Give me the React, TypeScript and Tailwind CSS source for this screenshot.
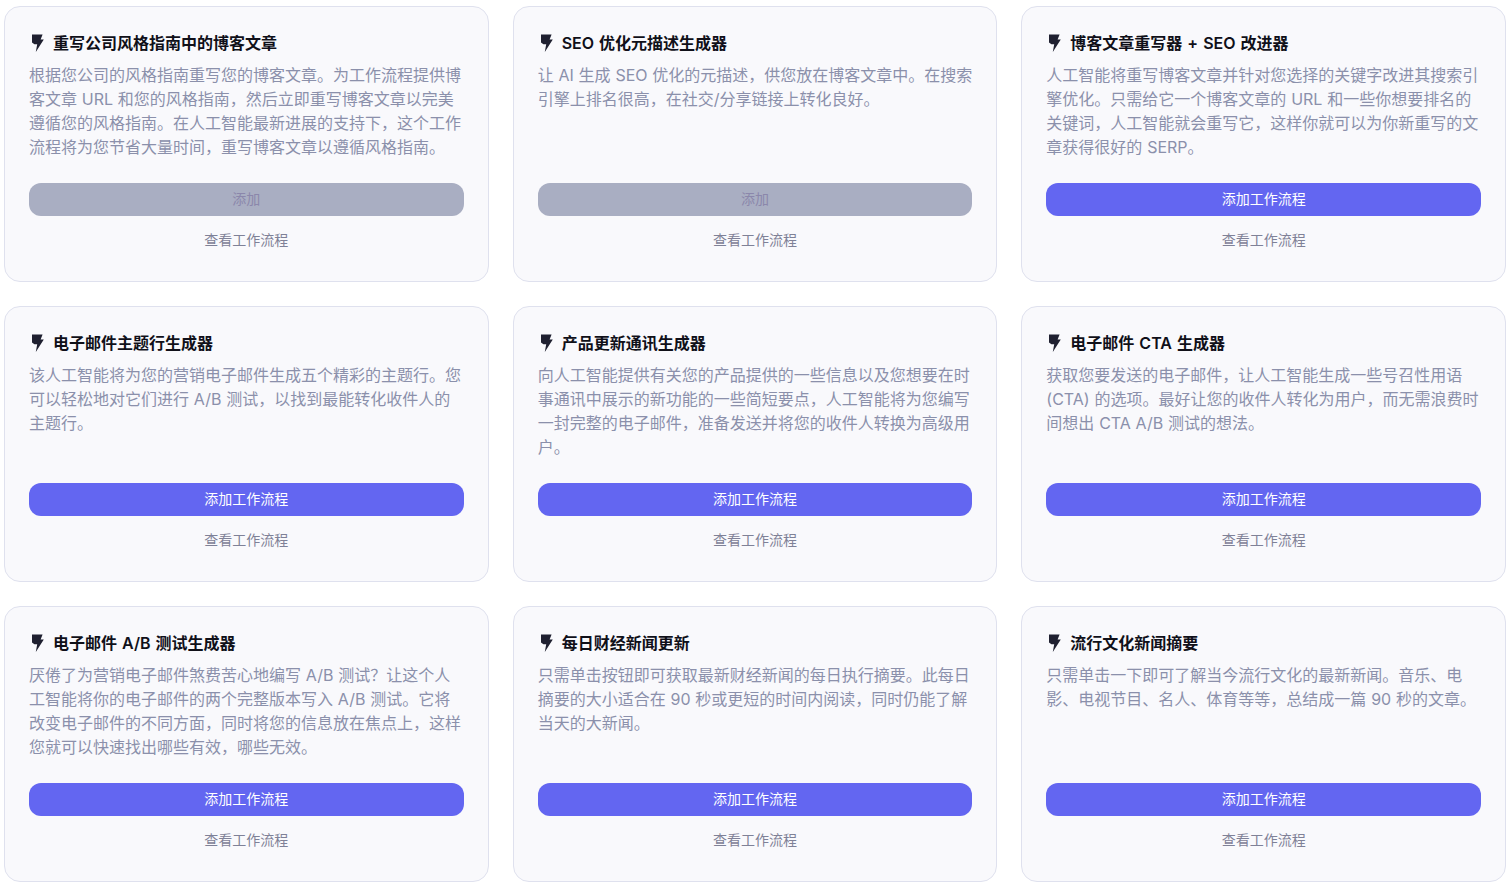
const cards = [
  { t: "重写公司风格指南中的博客文章", d: "根据您公司的风格指南重写您的博客文章。为工作流程提供博客文章 URL 和您的风格指南，然后立即重写博客文章以完美遵循您的风格指南。在人工智能最新进展的支持下，这个工作流程将为您节省大量时间，重写博客文章以遵循风格指南。", added: true },
  { t: "SEO 优化元描述生成器", d: "让 AI 生成 SEO 优化的元描述，供您放在博客文章中。在搜索引擎上排名很高，在社交/分享链接上转化良好。", added: true },
  { t: "博客文章重写器 + SEO 改进器", d: "人工智能将重写博客文章并针对您选择的关键字改进其搜索引擎优化。只需给它一个博客文章的 URL 和一些你想要排名的关键词，人工智能就会重写它，这样你就可以为你新重写的文章获得很好的 SERP。" },
  { t: "电子邮件主题行生成器", d: "该人工智能将为您的营销电子邮件生成五个精彩的主题行。您可以轻松地对它们进行 A/B 测试，以找到最能转化收件人的主题行。" },
  { t: "产品更新通讯生成器", d: "向人工智能提供有关您的产品提供的一些信息以及您想要在时事通讯中展示的新功能的一些简短要点，人工智能将为您编写一封完整的电子邮件，准备发送并将您的收件人转换为高级用户。" },
  { t: "电子邮件 CTA 生成器", d: "获取您要发送的电子邮件，让人工智能生成一些号召性用语 (CTA) 的选项。最好让您的收件人转化为用户，而无需浪费时间想出 CTA A/B 测试的想法。" },
  { t: "电子邮件 A/B 测试生成器", d: "厌倦了为营销电子邮件煞费苦心地编写 A/B 测试？让这个人工智能将你的电子邮件的两个完整版本写入 A/B 测试。它将改变电子邮件的不同方面，同时将您的信息放在焦点上，这样您就可以快速找出哪些有效，哪些无效。" },
  { t: "每日财经新闻更新", d: "只需单击按钮即可获取最新财经新闻的每日执行摘要。此每日摘要的大小适合在 90 秒或更短的时间内阅读，同时仍能了解当天的大新闻。" },
  { t: "流行文化新闻摘要", d: "只需单击一下即可了解当今流行文化的最新新闻。音乐、电影、电视节目、名人、体育等等，总结成一篇 90 秒的文章。" },
];

function Bolt() {
  return (
    <svg viewBox="0 0 16 20" className="w-4 h-5 shrink-0" fill="#1f2030">
      <path d="M3 1.6h10.6l-2 5h3.2L6.8 19l1.4-7.8H5.4L3 9.6z" />
    </svg>
  );
}

export default function App() {
  return (
    <div className="bg-white h-[886px] overflow-hidden px-1 pt-1.5 font-['Inter','Noto_Sans_CJK_SC',sans-serif]">
      <div className="grid grid-cols-3 gap-6">
        {cards.map((c) => (
          <div key={c.t} className="h-[276px] flex flex-col rounded-2xl border border-[#dfe1ee] bg-[#f9f9fc] px-6 pt-6">
            <div className="flex items-center gap-2 h-6">
              <Bolt />
              <h3 className="text-base leading-6 font-semibold text-[#101019] [word-spacing:1px]">{c.t}</h3>
            </div>
            <p className="mt-2 h-24 text-base leading-6 text-[#8b90ab] [word-spacing:0.3px]">{c.d}</p>
            <button
              className={
                c.added
                  ? "mt-6 h-[33px] w-full rounded-xl bg-[#a9aec2] pb-[2px] text-sm text-[#8b87ab]"
                  : "mt-6 h-[33px] w-full rounded-xl bg-[#6366f1] pb-[2px] text-sm text-white"
              }
            >
              {c.added ? "添加" : "添加工作流程"}
            </button>
            <a className="mt-[14px] text-center text-sm leading-5 text-[#7f8197]">查看工作流程</a>
          </div>
        ))}
      </div>
    </div>
  );
}
